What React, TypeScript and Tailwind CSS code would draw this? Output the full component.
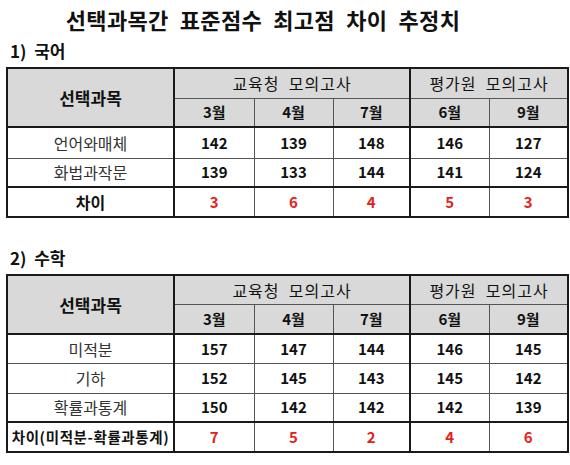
const months = ['3월', '4월', '7월', '6월', '9월'];

type Row = { name: string; values: number[] };

const korean: Row[] = [
  { name: '언어와매체', values: [142, 139, 148, 146, 127] },
  { name: '화법과작문', values: [139, 133, 144, 141, 124] },
];
const koreanDiff = { name: '차이', values: [3, 6, 4, 5, 3] };

const math: Row[] = [
  { name: '미적분', values: [157, 147, 144, 146, 145] },
  { name: '기하', values: [152, 145, 143, 145, 142] },
  { name: '확률과통계', values: [150, 142, 142, 142, 139] },
];
const mathDiff = { name: '차이(미적분-확률과통계)', values: [7, 5, 2, 4, 6] };

// thick line after 7월 column (index 2)
function colBorder(i: number) {
  if (i === 2) return 'border-r-2 border-r-[#1a1a1a]';
  if (i === 4) return '';
  return 'border-r border-r-[#555]';
}

function ScoreTable({ rows, diff, heights }: { rows: Row[]; diff: Row; heights: string[] }) {
  const long = diff.name.length > 4;
  return (
    <table className="w-[561px] table-fixed border-collapse border-2 border-[#1a1a1a] text-[15px] text-[#111]">
      <colgroup>
        <col className="w-[167px]" />
        <col className="w-[80px]" />
        <col className="w-[79px]" />
        <col className="w-[77px]" />
        <col className="w-[79px]" />
        <col className="w-[79px]" />
      </colgroup>
      <thead>
        <tr className={`bg-[#d9d9d9] ${heights[0]}`}>
          <th rowSpan={2} className="border-r-2 border-r-[#1a1a1a] border-b-2 border-b-[#1a1a1a] font-bold text-[17px]">
            선택과목
          </th>
          <th colSpan={3} className="border-r-2 border-r-[#1a1a1a] border-b border-b-[#555] font-normal text-[16px] tracking-[1px]">
            교육청&nbsp; 모의고사
          </th>
          <th colSpan={2} className="border-b border-b-[#555] font-normal text-[16px] tracking-[1px]">
            평가원&nbsp; 모의고사
          </th>
        </tr>
        <tr className={`bg-[#d9d9d9] ${heights[1]}`}>
          {months.map((m, i) => (
            <th key={m} className={`font-bold border-b-2 border-b-[#1a1a1a] ${colBorder(i)}`}>
              {m}
            </th>
          ))}
        </tr>
      </thead>
      <tbody>
        {rows.map((r, ri) => {
          const line = ri < rows.length - 1 ? 'border-b border-b-[#555]' : '';
          return (
            <tr key={r.name} className={`bg-white ${heights[ri + 2]}`}>
              <td className={`text-center text-[16px] text-[#333] border-r-2 border-r-[#1a1a1a] ${line}`}>{r.name}</td>
              {r.values.map((v, i) => (
                <td key={i} className={`text-center font-bold ${colBorder(i)} ${line}`}>
                  {v}
                </td>
              ))}
            </tr>
          );
        })}
        <tr className={`bg-white border-t-2 border-t-[#1a1a1a] ${heights[heights.length - 1]}`}>
          <td
            className={`text-center font-bold border-r-2 border-r-[#1a1a1a] whitespace-nowrap ${
              long ? 'text-[14.5px] tracking-[0.6px]' : 'text-[16px]'
            }`}
          >
            {diff.name}
          </td>
          {diff.values.map((v, i) => (
            <td key={i} className={`text-center font-bold text-[#e3221c] ${colBorder(i)}`}>
              {v}
            </td>
          ))}
        </tr>
      </tbody>
    </table>
  );
}

export default function App() {
  return (
    <div className="w-[570px] h-[465px] bg-white overflow-hidden font-['Malgun_Gothic','Noto_Sans_CJK_KR',sans-serif]">
      <h1 className="text-center text-[22px] font-bold text-[#111] leading-none pt-[8px] pr-[44px] [word-spacing:6px] tracking-[0.3px]">
        선택과목간 표준점수 최고점 차이 추정치
      </h1>
      <h2 className="text-[17px] font-bold text-[#111] leading-none ml-[10px] mt-[12px]">1)&nbsp; 국어</h2>
      <div className="ml-[6px] mt-[8px]">
        <ScoreTable rows={korean} diff={koreanDiff} heights={['h-[30px]', 'h-[29px]', 'h-[31px]', 'h-[29px]', 'h-[30px]']} />
      </div>
      <h2 className="text-[17px] font-bold text-[#111] leading-none ml-[10px] mt-[31px]">2)&nbsp; 수학</h2>
      <div className="ml-[6px] mt-[8px]">
        <ScoreTable
          rows={math}
          diff={mathDiff}
          heights={['h-[29px]', 'h-[30px]', 'h-[29px]', 'h-[30px]', 'h-[29px]', 'h-[30px]']}
        />
      </div>
    </div>
  );
}
